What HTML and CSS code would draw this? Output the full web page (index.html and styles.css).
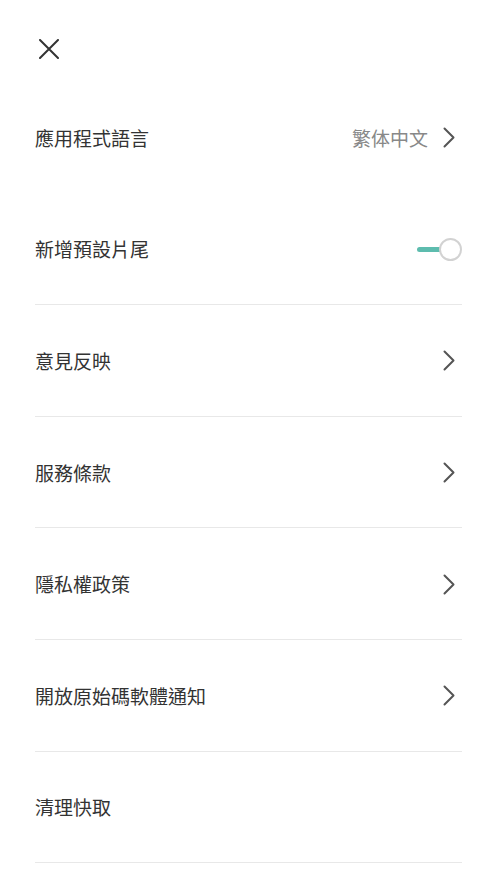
FILE: index.html
```html
<!DOCTYPE html>
<html lang="zh-Hant">
<head>
<meta charset="utf-8">
<title>設定</title>
<link rel="stylesheet" href="styles.css">
</head>
<body>
<div class="page">
  <header class="header">
    <svg class="close" width="20" height="20" viewBox="0 0 20 20"><path d="M1 1L19 19M19 1L1 19" stroke="#333" stroke-width="2" stroke-linecap="round"/></svg>
  </header>
  <ul class="list">
    <li class="row no-border">
      <span class="label">應用程式語言</span>
      <span class="right"><span class="value">繁体中文</span><svg class="chev" width="12" height="21" viewBox="0 0 12 21"><path d="M1.5 1.5L10.5 10.5L1.5 19.5" fill="none" stroke="#555" stroke-width="2" stroke-linecap="round" stroke-linejoin="round"/></svg></span>
    </li>
    <li class="row">
      <span class="label">新增預設片尾</span>
      <span class="toggle"><span class="track"></span><span class="knob"></span></span>
    </li>
    <li class="row">
      <span class="label">意見反映</span>
      <svg class="chev" width="12" height="21" viewBox="0 0 12 21"><path d="M1.5 1.5L10.5 10.5L1.5 19.5" fill="none" stroke="#555" stroke-width="2" stroke-linecap="round" stroke-linejoin="round"/></svg>
    </li>
    <li class="row">
      <span class="label">服務條款</span>
      <svg class="chev" width="12" height="21" viewBox="0 0 12 21"><path d="M1.5 1.5L10.5 10.5L1.5 19.5" fill="none" stroke="#555" stroke-width="2" stroke-linecap="round" stroke-linejoin="round"/></svg>
    </li>
    <li class="row">
      <span class="label">隱私權政策</span>
      <svg class="chev" width="12" height="21" viewBox="0 0 12 21"><path d="M1.5 1.5L10.5 10.5L1.5 19.5" fill="none" stroke="#555" stroke-width="2" stroke-linecap="round" stroke-linejoin="round"/></svg>
    </li>
    <li class="row">
      <span class="label">開放原始碼軟體通知</span>
      <svg class="chev" width="12" height="21" viewBox="0 0 12 21"><path d="M1.5 1.5L10.5 10.5L1.5 19.5" fill="none" stroke="#555" stroke-width="2" stroke-linecap="round" stroke-linejoin="round"/></svg>
    </li>
    <li class="row">
      <span class="label">清理快取</span>
    </li>
  </ul>
</div>
</body>
</html>
```
FILE: styles.css
```css
html, body {
  margin: 0;
  padding: 0;
  background: #fff;
}
body {
  font-family: "Noto Sans CJK TC", "Noto Sans", sans-serif;
  color: #333;
}
.page {
  padding: 0 35px;
}
.header {
  height: 82px;
  box-sizing: border-box;
  padding: 39px 0 0 4px;
}
.close {
  display: block;
}
.list {
  list-style: none;
  margin: 0;
  padding: 0;
}
.row {
  height: 111.6px;
  box-sizing: border-box;
  display: flex;
  align-items: center;
  justify-content: space-between;
  border-bottom: 1px solid #e8e8e8;
  padding-top: 1px;
}
.row.no-border {
  border-bottom: none;
  padding-top: 0;
}
.label {
  font-size: 19px;
  line-height: 24px;
  color: #333;
}
.right {
  display: flex;
  align-items: center;
}
.value {
  font-size: 19px;
  line-height: 24px;
  color: #888;
  margin-right: 15px;
}
.chev {
  display: block;
  margin-right: 7px;
}
.toggle {
  display: flex;
  align-items: center;
}
.track {
  width: 24px;
  height: 5px;
  border-radius: 3px 0 0 3px;
  background: #5dbcae;
  margin-right: -2px;
}
.knob {
  width: 19px;
  height: 19px;
  border: 2px solid #d2d2d2;
  border-radius: 50%;
  background: #fff;
}
```
